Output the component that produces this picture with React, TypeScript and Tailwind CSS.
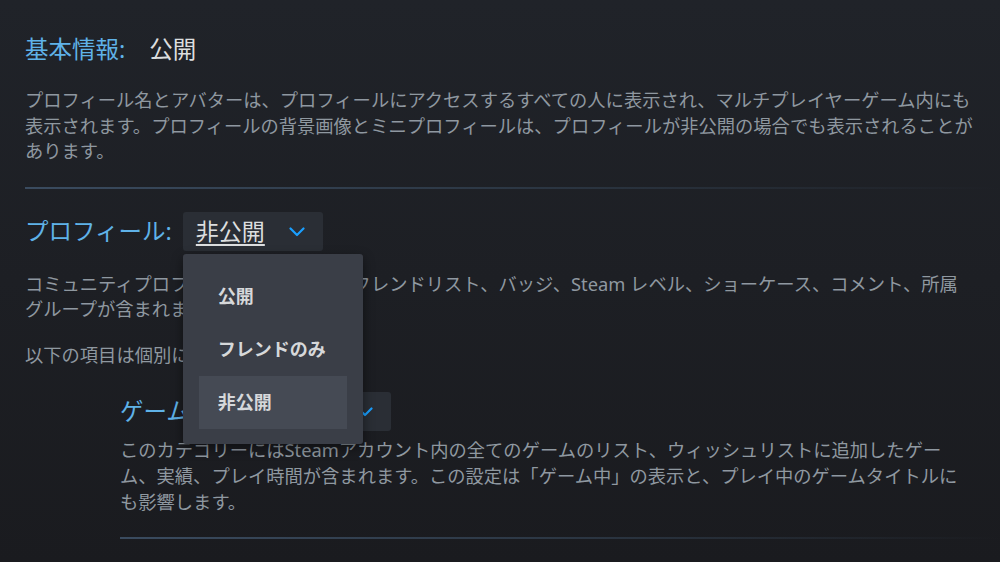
import React from "react";

function Chevron() {
  return (
    <svg width="16" height="10" viewBox="0 0 16 10" fill="none">
      <path d="M1.5 1.5 L8 8 L14.5 1.5" stroke="#1a9fff" strokeWidth="2.2" strokeLinecap="round" strokeLinejoin="round" />
    </svg>
  );
}

function Divider() {
  return <div className="h-[2px] bg-linear-to-r from-[#3a4b5f] via-[#2c3744] to-transparent" />;
}

export default function App() {
  return (
    <div className="w-[1000px] h-[562px] overflow-hidden bg-linear-to-b from-[#202329] to-[#1a1b1f] pl-[25px] pt-[30px] font-[family-name:'Noto_Sans','Noto_Sans_CJK_JP',sans-serif]">
      {/* Section 1 */}
      <div className="flex h-[40px] items-center text-[23.5px]">
        <span className="text-[#5fb2e8]">基本情報:</span>
        <span className="ml-[24px] text-[#dcdedf]">公開</span>
      </div>
      <p className="mt-[17px] w-[953px] text-[18.3px] leading-[25.5px] text-[#8f98a0]">
        プロフィール名とアバターは、プロフィールにアクセスするすべての人に表示され、マルチプレイヤーゲーム内にも表示されます。プロフィールの背景画像とミニプロフィールは、プロフィールが非公開の場合でも表示されることがあります。
      </p>
      <div className="mt-[23px]">
        <Divider />
      </div>

      {/* Section 2 */}
      <div className="mt-[23px] flex h-[40px] items-center">
        <span className="text-[23.5px] text-[#5fb2e8]">プロフィール:</span>
        <div className="relative z-10 ml-[11px]">
          <div className="flex h-[39px] w-[140px] items-center justify-between rounded-[3px] bg-[#2a2e35] pl-[13px] pr-[18px]">
            <span className="text-[23px] text-[#dcdedf] underline decoration-[1.5px] underline-offset-[4px]">非公開</span>
            <Chevron />
          </div>
          <div className="absolute left-0 top-[42px] w-[180px] rounded-[3px] bg-[#3a3e47] px-[16px] pt-[16px] pb-[15px] shadow-[0_4px_12px_rgba(0,0,0,0.45)]">
            <div className="flex h-[53px] items-center pl-[19px] text-[18px] font-semibold text-[#d6d8da]">公開</div>
            <div className="flex h-[53px] items-center pl-[19px] text-[18px] font-semibold text-[#d6d8da]">フレンドのみ</div>
            <div className="flex h-[53px] items-center bg-[#454a54] pl-[19px] text-[18px] font-semibold text-[#d6d8da]">非公開</div>
          </div>
        </div>
      </div>
      <p className="mt-[19px] w-[945px] text-[18.3px] leading-[25.5px] text-[#8f98a0]">
        コミュニティプロフィールには、概要、フレンドリスト、バッジ、Steam レベル、ショーケース、コメント、所属グループが含まれます。
      </p>
      <p className="mt-[20px] w-[953px] text-[18.3px] leading-[25.5px] text-[#8f98a0]">以下の項目は個別に設定できます。</p>

      {/* Sub section */}
      <div className="mt-[25px] pl-[95px]">
        <div className="flex h-[39px] items-center">
          <span className="text-[23.5px] text-[#5fb2e8]">ゲーム詳細:</span>
          <div className="ml-[8px] flex h-[39px] w-[140px] items-center justify-between rounded-[3px] bg-[#2a2e35] pl-[13px] pr-[18px]">
            <span className="text-[23px] text-[#dcdedf] underline decoration-[1.5px] underline-offset-[4px]">非公開</span>
            <Chevron />
          </div>
        </div>
        <p className="mt-[6px] w-[845px] text-[18.3px] leading-[26px] text-[#8f98a0]">
          このカテゴリーにはSteamアカウント内の全てのゲームのリスト、ウィッシュリストに追加したゲーム、実績、プレイ時間が含まれます。この設定は「ゲーム中」の表示と、プレイ中のゲームタイトルにも影響します。
        </p>
        <div className="mt-[22px]">
          <Divider />
        </div>
      </div>
    </div>
  );
}
